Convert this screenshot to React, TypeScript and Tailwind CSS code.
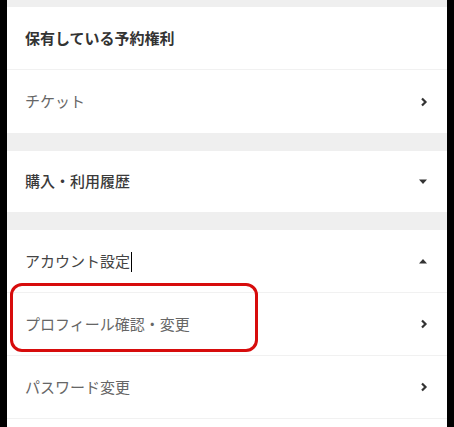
import React from "react";

const FONT = { fontFamily: '"Noto Sans CJK JP", "Noto Sans", sans-serif' };

function Chevron() {
  return (
    <svg width="8" height="10" viewBox="0 0 8 10" className="shrink-0">
      <polyline points="2,1.5 5.5,5 2,8.5" fill="none" stroke="#333" strokeWidth="2.2" />
    </svg>
  );
}

function Caret({ up }: { up?: boolean }) {
  return (
    <svg width="10" height="6" viewBox="0 0 10 6" className="shrink-0">
      {up ? <polygon points="1,5.5 9,5.5 5,1" fill="#333" /> : <polygon points="1,0.5 9,0.5 5,5" fill="#333" />}
    </svg>
  );
}

function Row({
  children,
  right,
  weight = "text-[#666]",
  h = "h-[63px]",
  divider = true,
}: {
  children: React.ReactNode;
  right?: React.ReactNode;
  weight?: string;
  h?: string;
  divider?: boolean;
}) {
  return (
    <div className={`flex ${h} items-center justify-between pl-[18px] pr-[19px] ${divider ? "border-b border-[#f1f1f1]" : ""}`}>
      <span className={`text-[15px] ${weight}`}>{children}</span>
      {right}
    </div>
  );
}

export default function App() {
  return (
    <div className="h-[427px] overflow-hidden bg-black px-[7px]" style={FONT}>
      <div className="relative h-full bg-white">
        <div className="h-[7px] bg-[#efefef]" />
        <Row weight="font-bold text-[#333]">保有している予約権利</Row>
        <Row right={<Chevron />} divider={false}>チケット</Row>
        <div className="h-[18px] bg-[#efefef]" />
        <Row weight="font-medium text-[#3a3a3a]" h="h-[61px]" right={<Caret />} divider={false}>
          購入・利用履歴
        </Row>
        <div className="h-[18px] bg-[#efefef]" />
        <Row weight="text-[#444]" right={<Caret up />}>
          アカウント設定
          <span className="ml-px inline-block h-[20px] w-px bg-black align-middle" />
        </Row>
        <Row right={<Chevron />}>プロフィール確認・変更</Row>
        <Row right={<Chevron />}>パスワード変更</Row>
        <div className="pointer-events-none absolute left-[3px] top-[283px] h-[69px] w-[248px] rounded-[12px] border-[3px] border-[#d70c0c]" />
      </div>
    </div>
  );
}
